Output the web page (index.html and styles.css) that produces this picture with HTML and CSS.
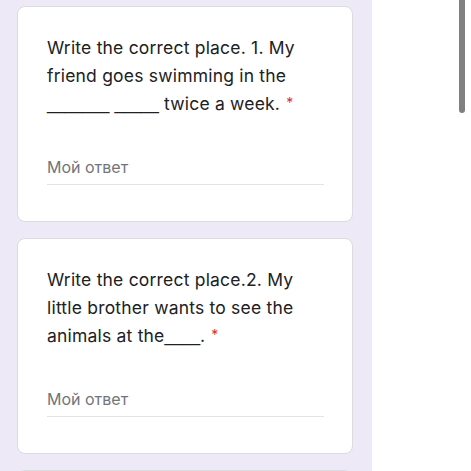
FILE: index.html
```html
<!DOCTYPE html>
<html>
<head>
<meta charset="utf-8">
<link rel="stylesheet" href="styles.css">
</head>
<body>
<div class="page">
  <main class="column">
    <section class="card">
      <div class="title">Write the correct place. 1. My friend goes swimming in the <span class="blank">_______</span> <span class="blank">_____</span> twice a week.<span class="req">*</span></div>
      <div class="answer">Мой ответ</div>
    </section>
    <section class="card">
      <div class="title">Write the correct place.2. My little brother wants to see the animals at the<span class="blank">____</span>.<span class="req">*</span></div>
      <div class="answer">Мой ответ</div>
    </section>
    <section class="card"></section>
  </main>
  <aside class="side">
    <div class="thumb"></div>
  </aside>
</div>
</body>
</html>
```

FILE: styles.css
```css
html, body {
  margin: 0;
  padding: 0;
  height: 100%;
  overflow: hidden;
  background: #ffffff;
}
.page {
  display: flex;
  height: 471px;
}
.column {
  width: 336px;
  flex: none;
  background: #ede9f7;
  padding: 6px 19px 0 17px;
  display: flex;
  flex-direction: column;
  gap: 16px;
}
.card {
  flex: none;
  height: 216px;
  box-sizing: border-box;
  background: #ffffff;
  border: 1px solid #dadce0;
  border-radius: 8px;
  padding: 27px 28px 0 29px;
  font-family: Inter, "Open Sans", sans-serif;
}
.title {
  font-size: 17.5px;
  line-height: 28px;
  height: 84px;
  letter-spacing: 0.2px;
  color: #202124;
}
.blank {
  font-family: "Liberation Sans", Arial, sans-serif;
  font-size: 16px;
  line-height: 1;
  letter-spacing: 0;
}
.req {
  color: #d93025;
  margin-left: 6px;
  font-size: 14px;
  line-height: 1;
  vertical-align: 2px;
}
.answer {
  margin-top: 37px;
  font-size: 16px;
  line-height: 24px;
  height: 29px;
  color: #70757a;
  border-bottom: 1px solid #e3e3e6;
}
.side {
  flex: 1;
  display: flex;
  justify-content: flex-end;
  padding-right: 6px;
}
.thumb {
  width: 6px;
  height: 113px;
  background: #808080;
  border-radius: 0 0 3px 3px;
}
```
